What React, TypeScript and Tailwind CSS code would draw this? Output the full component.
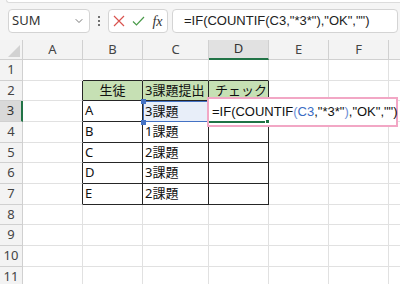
import { ChevronDown } from 'lucide-react'

const colLetters = ['A', 'B', 'C', 'D', 'E', 'F', 'G']

const data: Record<number, string[]> = {
  2: ['', '生徒', '3課題提出', 'チェック'],
  3: ['', 'A', '3課題', ''],
  4: ['', 'B', '1課題', ''],
  5: ['', 'C', '2課題', ''],
  6: ['', 'D', '3課題', ''],
  7: ['', 'E', '2課題', ''],
}

const gridCls = 'grid grid-cols-[23px_60px_60px_66px_60px_60px_60px_20px] grid-rows-[20px_repeat(11,20.67px)]'
const formulaFont = { fontFamily: '"Liberation Sans", Arial, sans-serif' }

function cellBorder(row: number, col: number) {
  const inTable = row >= 2 && row <= 7 && col >= 1 && col <= 3
  if (inTable) return 'border-r border-b border-r-[#262626] border-b-[#262626]'
  if (col === 0 && row >= 2 && row <= 7) return 'border-r border-b border-r-[#262626] border-b-[#e1e1e1]'
  if (row === 1 && col >= 1 && col <= 3) return 'border-r border-b border-r-[#e1e1e1] border-b-[#262626]'
  return 'border-r border-b border-[#e1e1e1]'
}

function Cell({ row, col }: { row: number; col: number }) {
  const text = data[row]?.[col] ?? ''
  const header = row === 2 && col >= 1 && col <= 3
  const bg = header ? 'bg-[#c6e0b4]' : 'bg-white'
  let content = null
  if (header && col === 1) {
    content = <span className="w-full text-center">{text}</span>
  } else if (header && col === 3) {
    content = (
      <span className="w-full flex justify-between px-[6px]">
        {text.split('').map((c, i) => (
          <span key={i}>{c}</span>
        ))}
      </span>
    )
  } else if (text) {
    content = <span className="pl-[2px] whitespace-nowrap">{text}</span>
  }
  return (
    <div className={`${cellBorder(row, col)} ${bg} flex items-center text-[13px] text-[#111] overflow-hidden`}>
      {content}
    </div>
  )
}

export default function App() {
  const rows = Array.from({ length: 11 }, (_, i) => i + 1)
  return (
    <div
      className="w-[400px] h-[284px] overflow-hidden bg-[#f5f5f5] flex flex-col"
      style={{ fontFamily: '"Noto Sans", "Noto Sans CJK JP", sans-serif' }}
    >
      {/* formula bar area */}
      <div className="h-[40px] shrink-0 flex flex-col">
        <div className="h-[3px] ml-[6px] bg-white border-b border-l border-[#dcdcdc] rounded-bl-[4px]" />
        <div className="flex items-start pt-[6px]">
          <div className="ml-[8px] w-[82px] h-[24px] bg-white border border-[#d4d4d4] rounded-[4px] flex items-center justify-between pl-[3px] pr-[4px]">
            <span className="text-[13px] text-[#333]">SUM</span>
            <ChevronDown size={12} strokeWidth={1.6} className="text-[#555]" />
          </div>
          <div className="w-[18px] h-[24px] flex flex-col items-center justify-center gap-[2px]">
            <span className="w-[2px] h-[2px] bg-[#444] rounded-full" />
            <span className="w-[2px] h-[2px] bg-[#444] rounded-full" />
            <span className="w-[2px] h-[2px] bg-[#444] rounded-full" />
          </div>
          <div className="w-[60px] h-[24px] bg-white border border-[#d4d4d4] rounded-[4px] flex items-center justify-around px-[1px]">
            <svg width="12" height="12" viewBox="0 0 12 12">
              <path d="M1 1L11 11M11 1L1 11" stroke="#d9534f" strokeWidth="1.2" fill="none" />
            </svg>
            <svg width="13" height="12" viewBox="0 0 13 12">
              <path d="M1 6.5L4.5 10L12 2" stroke="#4a9a4a" strokeWidth="1.2" fill="none" />
            </svg>
            <span className="text-[14px] italic text-[#333]" style={{ fontFamily: '"Liberation Serif", serif' }}>
              fx
            </span>
          </div>
          <div className="ml-[4px] mr-[2px] flex-1 h-[24px] bg-white border border-[#d4d4d4] rounded-[4px] flex items-center pl-[11px] overflow-hidden">
            <span className="text-[13px] text-[#222] whitespace-nowrap" style={formulaFont}>
              =IF(COUNTIF(C3,"*3*"),"OK","")
            </span>
          </div>
        </div>
      </div>

      {/* sheet grid */}
      <div className={`relative shrink-0 bg-white ${gridCls}`}>
        <div className="relative bg-[#f3f3f3] border-r border-b border-[#d0d0d0]">
          <svg className="absolute right-[2px] bottom-[2px]" width="12" height="12" viewBox="0 0 12 12">
            <path d="M12 0L12 12L0 12Z" fill="#d2d2d2" />
          </svg>
        </div>
        {colLetters.map(l => (
          <div
            key={l}
            className={
              l === 'D'
                ? 'bg-[#e1e1e1] border-r border-[#d0d0d0] border-b-2 border-b-[#217346] flex items-center justify-center text-[13px] text-[#333]'
                : 'bg-[#f3f3f3] border-r border-b border-[#d0d0d0] flex items-center justify-center text-[13px] text-[#444]'
            }
          >
            {l === 'G' ? '' : l}
          </div>
        ))}
        {rows.map(r => (
          <div key={r} className="contents">
            <div
              className={
                r === 3
                  ? 'bg-[#d9d9d9] border-b border-[#d0d0d0] border-r-2 border-r-[#217346] flex items-center justify-center text-[13px] text-[#333]'
                  : 'bg-[#f3f3f3] border-r border-b border-[#d0d0d0] flex items-center justify-center text-[13px] text-[#444]'
              }
            >
              {r}
            </div>
            {colLetters.map((_, c) => (
              <Cell key={c} row={r} col={c} />
            ))}
          </div>
        ))}

        {/* C3 reference highlight */}
        <div className="absolute left-[143px] top-[61px] w-[67px] h-[21px] bg-[#e8eef9] border border-[#4472c4] flex items-center">
          <span className="pl-[1px] text-[13px] text-[#111]">3課題</span>
        </div>
        <div className="absolute left-[141px] top-[59px] w-[5px] h-[5px] bg-[#4472c4]" />
        <div className="absolute left-[141px] top-[80px] w-[5px] h-[5px] bg-[#4472c4]" />

        {/* editing cell D3 */}
        <div className="absolute left-[207px] top-[57px] w-[191px] h-[30px] bg-white border-[2.5px] border-[#f2a7c5] flex items-center">
          <span className="pl-[3px] text-[13px] text-[#111] whitespace-nowrap" style={formulaFont}>
            =IF(COUNTIF<span className="text-[#6d8fd6]">(</span>
            <span className="text-[#3b6cc4]">C3</span>,"*3*"<span className="text-[#6d8fd6]">)</span>,"OK","")
          </span>
        </div>
        <div className="absolute left-[209px] top-[81px] w-[59px] h-[2px] bg-[#217346]" />
        <div className="absolute left-[265px] top-[79px] w-[5px] h-[5px] bg-[#217346] border border-white" />
      </div>
    </div>
  )
}
